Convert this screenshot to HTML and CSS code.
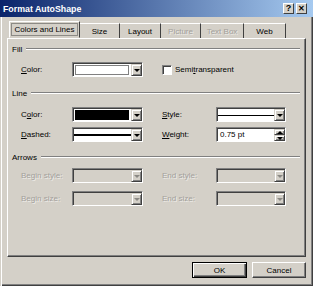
FILE: index.html
```html
<!DOCTYPE html>
<html>
<head>
  <title>Format AutoShape</title>
  <link rel="stylesheet" href="styles.css">
</head>
<body>
  <div class="window">
    <div class="titlebar">
      <span class="title">Format AutoShape</span>
      <div class="caption-btns">
        <span class="cbtn">?</span>
        <span class="cbtn close">&#x2715;</span>
      </div>
    </div>

    <div class="client">
      <div class="tabs">
        <div class="tab active w71"><span class="focus">Colors and Lines</span></div>
        <div class="tab w40">Size</div>
        <div class="tab w41">Layout</div>
        <div class="tab w40 off">Picture</div>
        <div class="tab w43 off">Text Box</div>
        <div class="tab w42">Web</div>
      </div>

      <div class="panel">
        <!-- Fill -->
        <div class="group-head"><span>Fill</span><div class="rule"></div></div>
        <div class="row first">
          <span class="lbl"><u>C</u>olor:</span>
          <div class="combo w-left"><div class="swatch"></div><div class="drop"></div></div>
          <div class="checkrow">
            <div class="check"></div>
            <span>Semi<u>t</u>ransparent</span>
          </div>
        </div>

        <!-- Line -->
        <div class="group-head next"><span>Line</span><div class="rule"></div></div>
        <div class="row line1">
          <span class="lbl">C<u>o</u>lor:</span>
          <div class="combo w-left"><div class="swatch black"></div><div class="drop"></div></div>
          <span class="lbl right"><u>S</u>tyle:</span>
          <div class="combo w-right"><div class="field stroke-thin"></div><div class="drop"></div></div>
        </div>
        <div class="row line2">
          <span class="lbl"><u>D</u>ashed:</span>
          <div class="combo w-left"><div class="field stroke-thick"></div><div class="drop"></div></div>
          <span class="lbl right"><u>W</u>eight:</span>
          <div class="combo w-right">
            <div class="field text">0.75 pt</div>
            <div class="spin"><div class="sbtn up"></div><div class="sbtn down"></div></div>
          </div>
        </div>

        <!-- Arrows -->
        <div class="group-head arrows"><span>Arrows</span><div class="rule"></div></div>
        <div class="row arrow1">
          <span class="lbl off">Begin style:</span>
          <div class="combo w-left disabled"><div class="field"></div><div class="drop"></div></div>
          <span class="lbl right off">End style:</span>
          <div class="combo w-right disabled"><div class="field"></div><div class="drop"></div></div>
        </div>
        <div class="row arrow2">
          <span class="lbl off">Begin size:</span>
          <div class="combo w-left disabled"><div class="field"></div><div class="drop"></div></div>
          <span class="lbl right off">End size:</span>
          <div class="combo w-right disabled"><div class="field"></div><div class="drop"></div></div>
        </div>
      </div>

      <div class="buttons">
        <div class="btn default">OK</div>
        <div class="btn cancel">Cancel</div>
      </div>
    </div>
  </div>
</body>
</html>
```

FILE: styles.css
```css
body {
  margin: 0;
  font-family: "Liberation Sans", Arial, sans-serif;
  font-size: 8px;
  color: #000;
  background: #d4d0c8;
}

.window {
  width: 313px;
  height: 286px;
  display: flex;
  flex-direction: column;
}

/* title bar */
.titlebar {
  height: 17px;
  flex: none;
  display: flex;
  align-items: center;
  padding: 0 6px 0 3px;
  background: linear-gradient(to right, #0a246a, #a6caf0);
}

.title {
  flex: 1;
  color: #fff;
  font-weight: bold;
  font-size: 8.8px;
}

.caption-btns {
  display: flex;
  gap: 2px;
}

.cbtn {
  width: 11px;
  height: 11px;
  box-sizing: border-box;
  background: #d4d0c8;
  border: 1px solid;
  border-color: #fff #404040 #404040 #fff;
  font-size: 9px;
  font-weight: bold;
  line-height: 9px;
  text-align: center;
}

.cbtn.close {
  font-size: 8px;
}

/* dialog body */
.client {
  flex: 1;
  padding: 4px 7px 0 7px;
  box-shadow: inset 1px 0 #d4d0c8, inset 2px 0 #fff, inset -1px -1px #404040, inset -2px -2px #808080;
}

.tabs {
  display: flex;
  height: 17px;
  margin-left: 2px;
}

.tab {
  box-sizing: border-box;
  margin-top: 2px;
  display: flex;
  align-items: center;
  justify-content: center;
  border-top: 1px solid #fff;
  border-right: 1px solid #404040;
}

.tab.active {
  margin-top: 0;
  border: 1px solid;
  border-color: #fff #404040 transparent #fff;
}

.focus {
  border: 1px solid #8c8a85;
  padding: 1px 2px;
}

.w71 { width: 71px; }
.w40 { width: 40px; }
.w41 { width: 41px; }
.w42 { width: 42px; }
.w43 { width: 43px; }

.off {
  color: #a3a09b;
  text-shadow: 1px 1px 0 rgba(255, 255, 255, 0.6);
}

.panel {
  height: 219px;
  box-sizing: border-box;
  border: 1px solid;
  border-color: #fff #404040 #404040 #fff;
  box-shadow: inset -1px -1px #808080;
  padding: 5px 5px 0 4px;
}

.group-head {
  display: flex;
  align-items: center;
  height: 10px;
}

.group-head span {
  margin-right: 4px;
}

.rule {
  flex: 1;
  border-top: 1px solid #808080;
  border-bottom: 1px solid #fff;
}

.group-head.next { margin-top: 11px; }
.group-head.arrows { margin-top: 10px; }

.row {
  display: flex;
  align-items: center;
  height: 15px;
  padding-left: 9px;
}

.row.first { margin-top: 8px; }
.row.line1 { margin-top: 9px; }
.row.line2 { margin-top: 5px; }
.row.arrow1 { margin-top: 6px; }
.row.arrow2 { margin-top: 8px; }

.lbl {
  width: 51px;
}

.lbl.right {
  margin-left: 19px;
  width: 54px;
}

/* combo boxes */
.combo {
  display: flex;
  height: 15px;
  box-sizing: border-box;
  border: 1px solid;
  border-color: #808080 #fff #fff #808080;
  box-shadow: inset 1px 1px #404040;
  padding: 1px 0 0 1px;
  background: #fff;
}

.w-left { width: 71px; }
.w-right { width: 70px; }

.combo.disabled {
  background: #d4d0c8;
}

.field {
  flex: 1;
}

.field.text {
  padding-left: 2px;
  line-height: 12px;
}

.stroke-thin {
  background: linear-gradient(#000, #000) center / 100% 1px no-repeat;
}

.stroke-thick {
  background: linear-gradient(#000, #000) center / 100% 2px no-repeat;
}

.swatch {
  flex: 1;
  margin: 1px 2px 1px 1px;
  border: 1px solid #808080;
  background: #fff;
}

.swatch.black {
  background: #000;
  border-color: #000;
}

.drop,
.sbtn {
  box-sizing: border-box;
  display: flex;
  align-items: center;
  justify-content: center;
  background: #d4d0c8;
  border: 1px solid;
  border-color: #d4d0c8 #404040 #404040 #d4d0c8;
  box-shadow: inset 1px 1px #fff, inset -1px -1px #808080;
}

.drop {
  width: 11px;
}

.drop::after,
.sbtn.down::after {
  content: "";
  border-top: 3px solid #000;
  border-left: 3px solid transparent;
  border-right: 3px solid transparent;
}

.sbtn.up::after {
  content: "";
  border-bottom: 3px solid #000;
  border-left: 3px solid transparent;
  border-right: 3px solid transparent;
}

.disabled .drop::after {
  border-top-color: #8a8883;
}

.spin {
  width: 11px;
  display: flex;
  flex-direction: column;
}

.sbtn {
  flex: 1;
}

/* checkbox */
.checkrow {
  display: flex;
  align-items: center;
  margin-left: 19px;
}

.check {
  width: 10px;
  height: 10px;
  box-sizing: border-box;
  border: 1px solid;
  border-color: #808080 #fff #fff #808080;
  box-shadow: inset 1px 1px #404040;
  background: #fff;
  margin-right: 3px;
}

/* dialog buttons */
.buttons {
  display: flex;
  justify-content: flex-end;
  gap: 5px;
  margin-top: 5px;
}

.btn {
  width: 54px;
  height: 16px;
  box-sizing: border-box;
  display: flex;
  align-items: center;
  justify-content: center;
  background: #d4d0c8;
  border: 1px solid;
  border-color: #fff #404040 #404040 #fff;
  box-shadow: inset -1px -1px #808080;
}

.btn.default {
  width: 55px;
  border-color: #000;
  box-shadow: inset 1px 1px #fff, inset -1px -1px #404040, inset -2px -2px #808080;
}
```
